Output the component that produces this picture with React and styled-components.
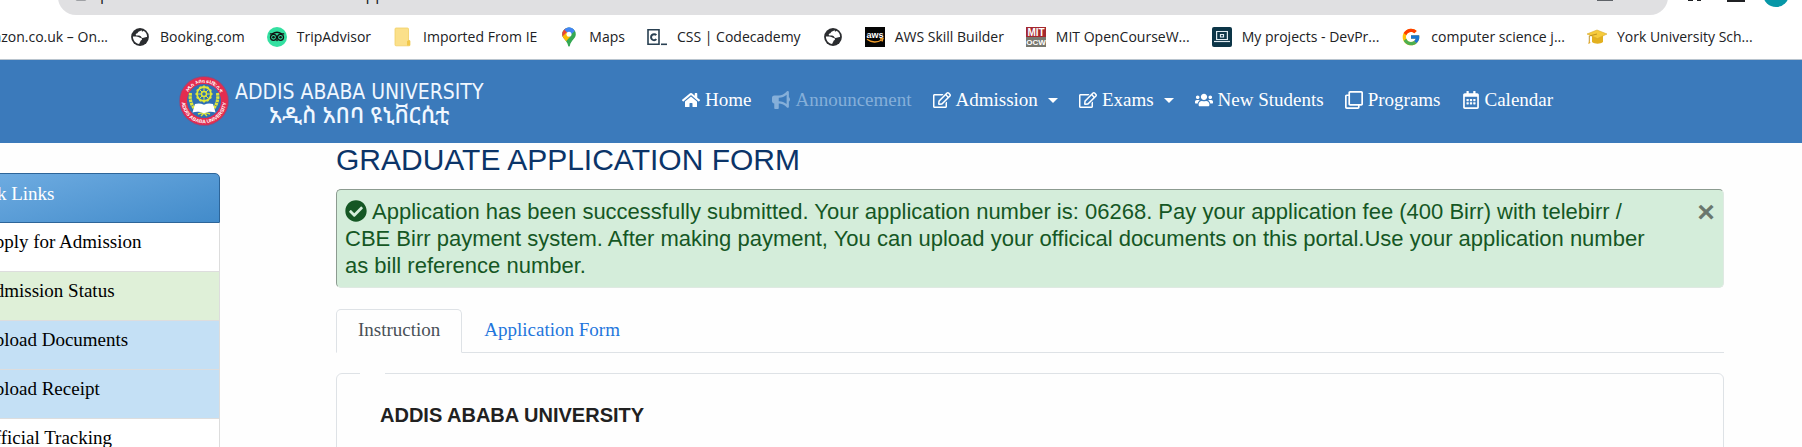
import React from "react";
import styled, { createGlobalStyle, css } from "styled-components";
import {
  FaHome,
  FaRegEdit,
  FaUsers,
  FaRegClone,
  FaRegCalendarAlt,
  FaCheckCircle,
} from "react-icons/fa";
import { FaBullhorn } from "react-icons/fa6";
import { FcGoogle } from "react-icons/fc";
import { Star, Lock, RotateCw } from "lucide-react";

const sans = `"Liberation Sans", Arial, sans-serif`;
const serif = `Georgia, "Liberation Serif", serif`;
const ui = `"Segoe UI", "Open Sans", sans-serif`;

const GlobalStyle = createGlobalStyle`
  *, *::before, *::after { box-sizing: border-box; }
  html, body { margin: 0; background: #fefefe; }
  body { font-family: ${serif}; font-size: 19px; line-height: 24px; color: #212529; overflow: hidden; }
  a { color: inherit; text-decoration: none; }
  svg { flex: none; display: block; }
`;

/* ---------- Browser chrome ---------- */

const Toolbar = styled.div`
  display: flex;
  align-items: flex-end;
  height: 15px;
  overflow: hidden;
  color: #202124;
  background: #fff;
`;

const ToolButton = styled.button`
  display: grid;
  place-items: center;
  width: ${(p) => p.$width || 36}px;
  height: 36px;
  flex: none;
  padding: 0 0 6px;
  border: 0;
  background: none;
  color: inherit;
`;

const AddressBar = styled.div`
  flex: 1;
  display: flex;
  align-items: center;
  height: 36px;
  padding: 0 6px 0 16px;
  border-radius: 18px;
  background: #e0e0e2;
  color: #5f6368;
  > svg,
  > input {
    margin-bottom: 6px;
  }
`;

const AddressInput = styled.input`
  flex: 1;
  height: 24px;
  padding: 0;
  margin-left: 12px;
  border: 0;
  background: none;
  font: 16px/20px ${ui};
  color: #202124;
`;

const Avatar = styled.span`
  width: 26px;
  height: 26px;
  border-radius: 50%;
  background: #0797a7;
`;

const BookmarkBar = styled.nav`
  display: flex;
  align-items: center;
  gap: 22px;
  height: 45px;
  border-bottom: 1px solid #b9c4ce;
  background: #fff;
  font: 14px/20px ${ui};
  color: #202124;
  overflow: hidden;
  white-space: nowrap;
`;

const Bookmark = styled.a`
  display: flex;
  align-items: center;
  gap: 10px;
  flex: none;
  &:first-child {
    width: 108px;
    justify-content: flex-end;
  }
`;

/* ---------- Site header ---------- */

const SiteHeader = styled.header`
  background: #3b7abb;
  height: 83px;
  display: flex;
  justify-content: center;
`;

const HeaderInner = styled.div`
  display: flex;
  align-items: center;
  width: 100%;
  max-width: 1444px;
  padding-bottom: 1px;
  color: #fff;
`;

const Brand = styled.a`
  display: flex;
  align-items: center;
  gap: 6px;
  width: 303px;
`;

const BrandText = styled.span`
  display: flex;
  flex-direction: column;
  align-items: center;
  padding-top: 4px;
  color: #f0f7ff;
  white-space: nowrap;
  font: 21px/22px "DejaVu Sans Condensed", "DejaVu Sans", sans-serif;
`;

const BrandAmharic = styled.span`
  font: 500 23px/22px "Noto Sans Ethiopic", "Abyssinica SIL", Nyala, sans-serif;
`;

const NavList = styled.ul`
  display: flex;
  gap: 21px;
  margin: 0 0 0 200px;
  padding: 0 0 2px;
  list-style: none;
`;

const NavLink = styled.a`
  display: flex;
  align-items: center;
  gap: 5px;
  white-space: nowrap;
  color: ${(p) => (p.$muted ? "#85afd9" : "#fff")};
  svg {
    height: 18px;
    width: auto;
  }
`;

const Caret = styled.span`
  margin-left: 5px;
  border: 5px solid transparent;
  border-top-color: currentColor;
  border-bottom: 0;
`;

/* ---------- Page body ---------- */

const Page = styled.div`
  display: flex;
  align-items: flex-start;
  gap: 116px;
  padding-right: 78px;
`;

const QuickLinks = styled.aside`
  flex: none;
  width: 280px;
  margin: 30px 0 0 -60px;
`;

const QuickHeading = styled.h2`
  margin: 0;
  height: 50px;
  padding: 8px 19px;
  border: 1px solid #2d6599;
  border-radius: 5px 5px 0 0;
  background: linear-gradient(165deg, #74b0e4, #428bca);
  color: #fff;
  font: inherit;
`;

const QuickList = styled.ul`
  margin: 0;
  padding: 0;
  list-style: none;
  border-right: 1px solid #ddd;
`;

const tones = { plain: "#fff", green: "#dff0d8", blue: "#c4e0f5" };

const QuickLink = styled.a`
  display: block;
  padding: 7px 0 17px 41px;
  border-bottom: 1px solid #ddd;
  background: ${(p) => tones[p.$tone]};
  color: #000;
`;

const Main = styled.main`
  flex: 1;
  min-width: 0;
`;

const Title = styled.h1`
  margin: 0 0 12px;
  font: 30px/34px ${sans};
  color: #0b3468;
`;

const Alert = styled.div`
  display: flex;
  align-items: flex-start;
  padding: 8px;
  border: 1px solid #dfe9e2;
  border-top-color: #8c9b90;
  border-left-color: #8c9b90;
  border-radius: 5px;
  background: #d4edda;
  color: #155724;
  font: 22px/27px ${sans};
`;

const AlertText = styled.p`
  flex: 1;
  margin: 0;
  svg {
    display: inline-block;
    vertical-align: -3px;
    margin-right: 5px;
  }
`;

const CloseButton = styled.button`
  flex: none;
  margin-left: 40px;
  padding: 0;
  width: 18px;
  border: 0;
  background: none;
  font: bold 30px/28px ${sans};
  color: #6a776d;
`;

const Tabs = styled.div`
  display: flex;
  margin: 21px 0 20px;
  border-bottom: 1px solid #dee2e6;
`;

const Tab = styled.button`
  margin-bottom: -1px;
  padding: 8px 21px 10px;
  border: 1px solid transparent;
  border-radius: 5px 5px 0 0;
  background: none;
  font: inherit;
  color: #1f76dc;
  ${(p) =>
    p.$active &&
    css`
      border-color: #dee2e6 #dee2e6 #fefefe;
      background: #fefefe;
      color: #495057;
    `}
`;

const Section = styled.fieldset`
  min-width: 0;
  min-height: 120px;
  margin: 0;
  padding: 0 23px;
  border: 1px solid #dee2e6;
  border-radius: 6px;
`;

const SectionLegend = styled.legend`
  width: 25px;
  height: 1px;
  padding: 0;
`;

const SectionHeading = styled.h3`
  margin: 0;
  padding: 29px 20px;
  font: bold 20px/24px ${sans};
  color: #212121;
`;

/* ---------- Drawings ---------- */

const GlobeIcon = () => (
  <svg width="20" height="20" viewBox="0 0 20 20">
    <circle cx="10" cy="10" r="8.900" fill="#2a2c2f" />
    <path d="M11.500 2.900c-.6 1.200-3.300 1-3.600 2.500-.2 1.200-2.400 1-2.200 2.400.2 1.200 2.800.5 4.100.9 1.700.5 1.200 2.300 2.900 2.300 1.500 0 2.300-1.100 4.400-.9.1-3.400-1.700-5.400-3.600-6.300-.3 1-2 1.200-2-.9zM2.900 9.600c0 4 2.900 7.200 6.400 7.500-.2-1.300.8-1.700 1-2.700.2-1.300 1.700-1 1.700-2.200 0-1.500-2-1.100-3-1.900-1-.8-2.900-.9-6.100-.7z" fill="#fff" />
  </svg>
);

const OwlIcon = () => (
  <svg width="20" height="20" viewBox="0 0 20 20">
    <circle cx="10" cy="10" r="10" fill="#34e0a1" />
    <path d="M2.800 6.900h2.500C8 5 12 5 14.700 6.900h2.500" fill="none" stroke="#111" strokeWidth="1.300" />
    <path d="M8.500 12.500L10 14.500l1.500-2z" fill="#111" />
    <g fill="#34e0a1" stroke="#111" strokeWidth="1.300">
      <circle cx="6.500" cy="10.300" r="3" />
      <circle cx="13.500" cy="10.300" r="3" />
    </g>
    <circle cx="6.500" cy="10.300" r="1.300" fill="#111" />
    <circle cx="13.500" cy="10.300" r="1.300" fill="#111" />
  </svg>
);

const FolderIcon = () => (
  <svg width="20" height="20" viewBox="0 0 20 20">
    <path d="M3 1h11.500q1 0 1 1v11l1.500.8V18q0 .8-1 .8H3q-1 0-1-1V2q0-1 1-1z" fill="#fbe08a" stroke="#f1cf64" strokeWidth=".8" />
    <path d="M14 18.500v-4.200l1.500-1.300 1.500 1v4.500z" fill="#f2c84b" />
  </svg>
);

const MapsIcon = () => (
  <svg width="20" height="20" viewBox="0 0 20 20">
    <defs>
      <clipPath id="pin">
        <path d="M10 .5a6.800 6.800 0 0 1 6.800 6.800c0 4.600-4.700 5.600-6 11.600q-.8 1.400-1.600 0C7.900 12.900 3.200 11.900 3.200 7.300A6.800 6.800 0 0 1 10 .5z" />
      </clipPath>
    </defs>
    <g clipPath="url(#pin)">
      <path d="M0 0h20v20H0z" fill="#34a853" />
      <path d="M10 9l8-7V-1H8z" fill="#4285f4" />
      <path d="M0 0h5.500l4.500 5-7 8z" fill="#ea4335" />
      <path d="M2 11l6-6 3 5-6.500 7z" fill="#fbbc04" />
      <path d="M5 2.500L8 0h7l-5 7z" fill="#4285f4" />
    </g>
    <circle cx="10" cy="7.300" r="2.500" fill="#fff" />
  </svg>
);

const CodeIcon = () => (
  <svg width="20" height="20" viewBox="0 0 20 20">
    <path d="M1 2.700h11v14.500H1z" fill="none" stroke="#294052" strokeWidth="1.600" />
    <path d="M9.300 8.200a3 3 0 1 0 0 4" fill="none" stroke="#294052" strokeWidth="2" />
    <path d="M14 17.300h6" stroke="#294052" strokeWidth="1.600" />
  </svg>
);

const AwsIcon = () => (
  <svg width="20" height="20" viewBox="0 0 20 20">
    <path d="M0 0h20v20H0z" fill="#050505" />
    <text x="10" y="10.500" textAnchor="middle" fontFamily="Liberation Sans, sans-serif" fontWeight="bold" fontSize="9" fill="#fff">aws</text>
    <path d="M2 12.300c4.500 3.500 10.500 3.500 14.500.7M15 11.800l3-.3-1 3" fill="none" stroke="#f5a02c" strokeWidth="1.300" />
  </svg>
);

const MitIcon = () => (
  <svg width="20" height="20" viewBox="0 0 20 20">
    <path d="M0 0h20v10H0z" fill="#a4282f" />
    <path d="M0 10h20v10H0z" fill="#77786f" />
    <g textAnchor="middle" fontFamily="Liberation Sans, sans-serif" fontWeight="bold" fill="#fff">
      <text x="10" y="9" fontSize="10">MIT</text>
      <text x="10" y="18" fontSize="8">OCW</text>
    </g>
  </svg>
);

const LaptopIcon = () => (
  <svg width="20" height="20" viewBox="0 0 20 20">
    <rect width="20" height="20" rx="2" fill="#0c3547" />
    <g fill="none" stroke="#dfeaf0" strokeWidth="1.200">
      <path d="M4.600 12.500v-8h10.800v8z" />
      <path d="M2 14.500h16" />
      <path d="M8.500 7.500h3v2.500h-3z" />
    </g>
  </svg>
);

const CapIcon = () => (
  <svg width="20" height="20" viewBox="0 0 20 20">
    <path d="M5 9v6c2.500 2.200 8.500 2.200 11 0V9z" fill="#e2b01f" />
    <path d="M0 7l10-4 10 4-9.500 4.500z" fill="#f6cb3c" stroke="#d9a92b" strokeWidth=".6" />
    <path d="M10 7L2.300 9v5.500" fill="none" stroke="#b98a1c" strokeWidth=".9" />
    <path d="M1.200 17l1-4 1.300 3z" fill="#e0a92b" />
  </svg>
);

const teeth = Array.from({ length: 12 }, (_, i) => i * 30);

const Seal = () => (
  <svg width="50" height="50" viewBox="0 0 50 50">
    <defs>
      <path id="sealTop" d="M6.500 25a18.500 18.500 0 0 1 37 0" />
      <path id="sealBottom" d="M2.800 25a22.200 22.200 0 0 0 44.400 0" />
    </defs>
    <circle cx="25" cy="25" r="24.500" fill="#e32c4f" stroke="#6a5c93" strokeWidth=".8" />
    <circle cx="25" cy="25" r="17" fill="#2f6fb4" />
    <g fill="#fff" fontFamily="Liberation Sans, sans-serif" fontWeight="bold" textAnchor="middle">
      <text fontSize="5">
        <textPath href="#sealBottom" startOffset="50%">ADDIS ABABA UNIVERSITY</textPath>
      </text>
      <text fontSize="5">
        <textPath href="#sealTop" startOffset="50%">አዲስ አበባ ዩኒቨርሲቲ</textPath>
      </text>
    </g>
    <g stroke="#dfe537" fill="none">
      <circle cx="25" cy="18" r="7" strokeWidth="1.800" />
      {teeth.map((a) => (
        <path key={a} d="M25 9.500v2" strokeWidth="2" transform={`rotate(${a} 25 18)`} />
      ))}
      <circle cx="25" cy="18" r="2.500" strokeWidth="1.400" />
      <path d="M25 12v3.500M25 20.500V24M19 18h3.500M27.500 18H31M20.800 13.800l2.400 2.400M29.200 13.800l-2.400 2.400M20.800 22.200l2.400-2.400M29.200 22.200l-2.400-2.400" strokeWidth="1" />
      <path d="M11.500 17c-1 6 .5 12 4.500 16M38.500 17c1 6-.5 12-4.500 16" strokeWidth="3.200" strokeDasharray="2.600 .7" />
      <path d="M19 38c3-1.500 9-1.500 12 0M22 40l3-3 3 3" strokeWidth="1.400" />
    </g>
    <path d="M16 28c3-1 6-.8 9 .8 3-1.600 6-1.800 9-.8l2.500 8.500c-4-1.200-8-1-11.500 1-3.500-2-7.500-2.200-11.500-1z" fill="#fff" />
  </svg>
);

/* ---------- Content ---------- */

const bookmarks = [
  { label: "Amazon.co.uk – On..." },
  { icon: <GlobeIcon />, label: "Booking.com" },
  { icon: <OwlIcon />, label: "TripAdvisor" },
  { icon: <FolderIcon />, label: "Imported From IE" },
  { icon: <MapsIcon />, label: "Maps" },
  { icon: <CodeIcon />, label: "CSS | Codecademy" },
  { icon: <GlobeIcon /> },
  { icon: <AwsIcon />, label: "AWS Skill Builder" },
  { icon: <MitIcon />, label: "MIT OpenCourseW..." },
  { icon: <LaptopIcon />, label: "My projects - DevPr..." },
  { icon: <FcGoogle size={20} />, label: "computer science j..." },
  { icon: <CapIcon />, label: "York University Sch..." },
];

const navItems = [
  { Icon: FaHome, label: "Home" },
  { Icon: FaBullhorn, label: "Announcement", muted: true },
  { Icon: FaRegEdit, label: "Admission", menu: true },
  { Icon: FaRegEdit, label: "Exams", menu: true },
  { Icon: FaUsers, label: "New Students" },
  { Icon: FaRegClone, label: "Programs" },
  { Icon: FaRegCalendarAlt, label: "Calendar" },
];

const quickLinks = [
  { label: "Apply for Admission", tone: "plain" },
  { label: "Admission Status", tone: "green" },
  { label: "Upload Documents", tone: "blue" },
  { label: "Upload Receipt", tone: "blue" },
  { label: "Official Tracking", tone: "plain" },
];

export default function App() {
  return (
    <>
      <GlobalStyle />
      <Toolbar>
        <ToolButton aria-label="Reload" $width={58}><RotateCw size={14} /></ToolButton>
        <AddressBar>
          <Lock size={14} />
          <AddressInput aria-label="Address" defaultValue="portal.aau.edu.et/Home/GraduateApplication/" />
          <ToolButton aria-label="Share" $width={42}>
            <svg width="16" height="14" viewBox="0 0 16 14" fill="none" stroke="currentColor" strokeWidth="2"><path d="M1 0v13h14V0" /></svg>
          </ToolButton>
          <ToolButton aria-label="Bookmark"><Star size={14} /></ToolButton>
        </AddressBar>
        <ToolButton aria-label="Extensions" $width={54}>
          <svg width="14" height="14" viewBox="0 0 14 14" fill="currentColor"><path d="M0 2h13v12H9v-2H5v2H0z" /></svg>
        </ToolButton>
        <ToolButton aria-label="Side panel" $width={28}>
          <svg width="18" height="16" viewBox="0 0 18 16" fill="none" stroke="currentColor" strokeWidth="2"><path d="M1 1h16v14H1z" /></svg>
        </ToolButton>
        <ToolButton aria-label="Profile" $width={52}><Avatar /></ToolButton>
      </Toolbar>
      <BookmarkBar aria-label="Bookmarks">
        {bookmarks.map((b, i) => (
          <Bookmark key={i} href="#" aria-label={b.label || "Website"}>
            {b.icon}
            {b.label && <span>{b.label}</span>}
          </Bookmark>
        ))}
      </BookmarkBar>

      <SiteHeader>
        <HeaderInner>
          <Brand href="#">
            <Seal />
            <BrandText>
              <span>ADDIS ABABA UNIVERSITY</span>
              <BrandAmharic lang="am">አዲስ አበባ ዩኒቨርሲቲ</BrandAmharic>
            </BrandText>
          </Brand>
          <nav aria-label="Main">
            <NavList>
              {navItems.map(({ Icon, label, muted, menu }) => (
                <li key={label}>
                  <NavLink href="#" $muted={muted}>
                    <Icon />
                    {label}
                    {menu && <Caret />}
                  </NavLink>
                </li>
              ))}
            </NavList>
          </nav>
        </HeaderInner>
      </SiteHeader>

      <Page>
        <QuickLinks>
          <QuickHeading>Quick Links</QuickHeading>
          <QuickList>
            {quickLinks.map((l) => (
              <li key={l.label}>
                <QuickLink href="#" $tone={l.tone}>{l.label}</QuickLink>
              </li>
            ))}
          </QuickList>
        </QuickLinks>
        <Main>
          <Title>GRADUATE APPLICATION FORM</Title>
          <Alert role="alert">
            <AlertText>
              <FaCheckCircle />
              Application has been successfully submitted. Your application number is: 06268. Pay your
              application fee (400 Birr) with telebirr / CBE Birr payment system. After making payment,
              You can upload your officical documents on this portal.Use your application number as bill
              reference number.
            </AlertText>
            <CloseButton aria-label="Close">×</CloseButton>
          </Alert>
          <Tabs role="tablist">
            <Tab role="tab" aria-selected="true" $active>Instruction</Tab>
            <Tab role="tab" aria-selected="false">Application Form</Tab>
          </Tabs>
          <Section>
            <SectionLegend />
            <SectionHeading>ADDIS ABABA UNIVERSITY</SectionHeading>
          </Section>
        </Main>
      </Page>
    </>
  );
}
